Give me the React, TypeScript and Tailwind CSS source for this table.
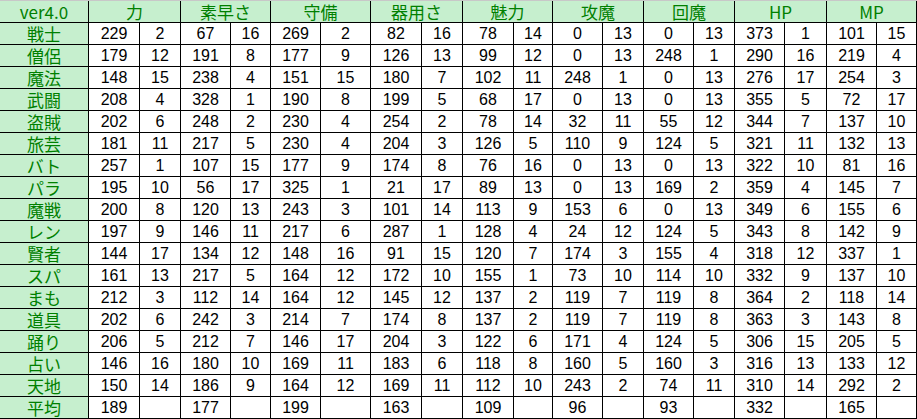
import React from "react";

const stats = ["力", "素早さ", "守備", "器用さ", "魅力", "攻魔", "回魔", "HP", "MP"];

const rows: [string, number[]][] = [
  ["戦士", [229, 2, 67, 16, 269, 2, 82, 16, 78, 14, 0, 13, 0, 13, 373, 1, 101, 15]],
  ["僧侶", [179, 12, 191, 8, 177, 9, 126, 13, 99, 12, 0, 13, 248, 1, 290, 16, 219, 4]],
  ["魔法", [148, 15, 238, 4, 151, 15, 180, 7, 102, 11, 248, 1, 0, 13, 276, 17, 254, 3]],
  ["武闘", [208, 4, 328, 1, 190, 8, 199, 5, 68, 17, 0, 13, 0, 13, 355, 5, 72, 17]],
  ["盗賊", [202, 6, 248, 2, 230, 4, 254, 2, 78, 14, 32, 11, 55, 12, 344, 7, 137, 10]],
  ["旅芸", [181, 11, 217, 5, 230, 4, 204, 3, 126, 5, 110, 9, 124, 5, 321, 11, 132, 13]],
  ["バト", [257, 1, 107, 15, 177, 9, 174, 8, 76, 16, 0, 13, 0, 13, 322, 10, 81, 16]],
  ["パラ", [195, 10, 56, 17, 325, 1, 21, 17, 89, 13, 0, 13, 169, 2, 359, 4, 145, 7]],
  ["魔戦", [200, 8, 120, 13, 243, 3, 101, 14, 113, 9, 153, 6, 0, 13, 349, 6, 155, 6]],
  ["レン", [197, 9, 146, 11, 217, 6, 287, 1, 128, 4, 24, 12, 124, 5, 343, 8, 142, 9]],
  ["賢者", [144, 17, 134, 12, 148, 16, 91, 15, 120, 7, 174, 3, 155, 4, 318, 12, 337, 1]],
  ["スパ", [161, 13, 217, 5, 164, 12, 172, 10, 155, 1, 73, 10, 114, 10, 332, 9, 137, 10]],
  ["まも", [212, 3, 112, 14, 164, 12, 145, 12, 137, 2, 119, 7, 119, 8, 364, 2, 118, 14]],
  ["道具", [202, 6, 242, 3, 214, 7, 174, 8, 137, 2, 119, 7, 119, 8, 363, 3, 143, 8]],
  ["踊り", [206, 5, 212, 7, 146, 17, 204, 3, 122, 6, 171, 4, 124, 5, 306, 15, 205, 5]],
  ["占い", [146, 16, 180, 10, 169, 11, 183, 6, 118, 8, 160, 5, 160, 3, 316, 13, 133, 12]],
  ["天地", [150, 14, 186, 9, 164, 12, 169, 11, 112, 10, 243, 2, 74, 11, 310, 14, 292, 2]],
];

const average = [189, 177, 199, 163, 109, 96, 93, 332, 165];

const cell = "flex items-center justify-center border-r border-b border-black";
const label = `${cell} bg-[#c6efce] text-[#008000] text-[17px] font-['Noto_Sans_CJK_JP',sans-serif]`;
const num = `${cell} bg-white text-black text-[16px] font-['Liberation_Sans',sans-serif]`;

export default function App() {
  return (
    <div className="w-[917px] h-[419px] bg-white overflow-hidden border-t border-[#c8c8c8]">
      <div className="grid grid-cols-[89px_51px_41px_50px_40px_50px_50px_51px_41px_51px_39px_50px_41px_50px_41px_50px_42px_50px_40px] auto-rows-[22px] leading-none">
        {/* header */}
        <div className={`${label} text-[15px] font-['Liberation_Sans',sans-serif]`}>ver4.0</div>
        {stats.map((s) => (
          <div key={s} className={`${label} col-span-2`}>
            {s}
          </div>
        ))}

        {/* classes */}
        {rows.map(([name, vals]) => (
          <React.Fragment key={name}>
            <div className={label}>{name}</div>
            {vals.map((v, i) => (
              <div key={i} className={num}>
                {v}
              </div>
            ))}
          </React.Fragment>
        ))}

        {/* average */}
        <div className={label}>平均</div>
        {average.map((v, i) => (
          <React.Fragment key={i}>
            <div className={num}>{v}</div>
            <div className={num}></div>
          </React.Fragment>
        ))}
      </div>
    </div>
  );
}
